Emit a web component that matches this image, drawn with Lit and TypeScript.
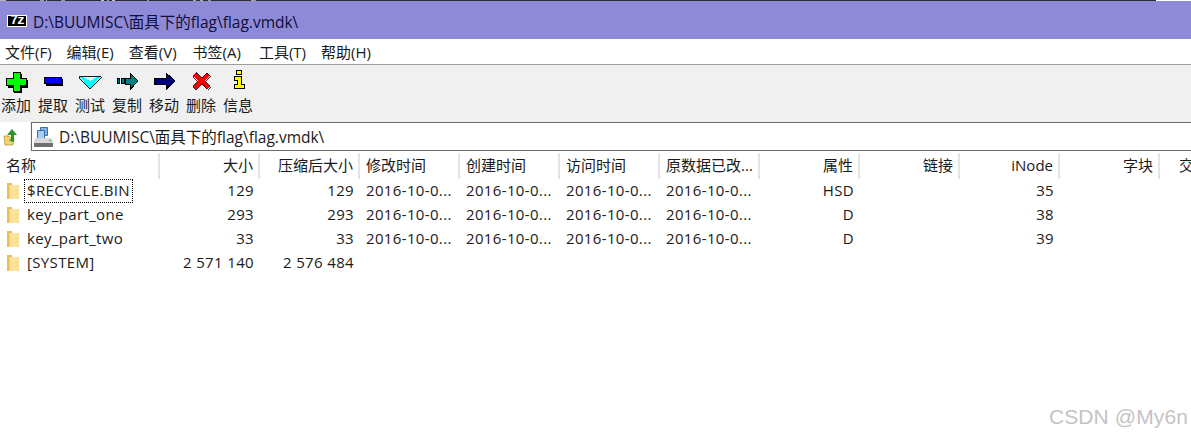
import { LitElement, html, css, svg } from "lit";
import { customElement } from "lit/decorators.js";

const cols = [
  { t: "名称", w: 160, l: true },
  { t: "大小", w: 100 },
  { t: "压缩后大小", w: 100 },
  { t: "修改时间", w: 100, l: true },
  { t: "创建时间", w: 100, l: true },
  { t: "访问时间", w: 100, l: true },
  { t: "原数据已改...", w: 100, l: true },
  { t: "属性", w: 100 },
  { t: "链接", w: 100 },
  { t: "iNode", w: 100 },
  { t: "字块", w: 100 },
  { t: "交", w: 100, l: true, far: true },
];
const d = "2016-10-0...";
const rows = [
  ["$RECYCLE.BIN", "129", "129", d, d, d, d, "HSD", "", "35", "", ""],
  ["key_part_one", "293", "293", d, d, d, d, "D", "", "38", "", ""],
  ["key_part_two", "33", "33", d, d, d, d, "D", "", "39", "", ""],
  ["[SYSTEM]", "2 571 140", "2 576 484", "", "", "", "", "", "", "", "", ""],
];

// Light gaps in the dark one-pixel line at the very top: [width, colour]
const stripSegs: [number, string][] = [
  [6, "#b9b4a8"], [34, "#2e2a2e"], [4, "#8b9ab0"], [2, "#2e2a2e"], [1, "#c2b9a0"], [14, "#2e2a2e"],
  [4, "#8b9ab0"], [36, "#2e2a2e"], [3, "#c9c4b8"], [3, "#2e2a2e"], [2, "#8b9ab0"], [3, "#2e2a2e"], [3, "#c9c4b8"],
  [32, "#2e2a2e"], [2, "#8b9ab0"], [44, "#2e2a2e"], [3, "#b9a080"], [4, "#2e2a2e"], [3, "#a0b0a0"],
  [5, "#2e2a2e"], [3, "#8b9ab0"], [40, "#2e2a2e"], [3, "#c9a060"], [2, "#8b9ab0"], [900, "#2e2a2e"],
];

const k = "#000";
const icons = [
  svg`<path d="M14 5h8v6h6v8h-6v6h-8v-6H8v-8h6z" fill="${k}"/><path d="M13.500 3.500h7v6h6v7h-6v6h-7v-6h-7v-7h7z" fill="#00ff00" stroke="${k}"/>`,
  svg`<path d="M9 10h17v7H9z" fill="${k}"/><path d="M7.500 8.500h17v6h-17z" fill="#0000ff" stroke="${k}"/>`,
  svg`<path d="M5 7.500h22L16 19.500z" fill="#00ffff" stroke="${k}" stroke-width=".9"/><path d="M9 8l7 4 7-4z" fill="#d8ffff"/>`,
  svg`<path d="M6.500 9.500h2v5h-2zM10.500 9.500h3v5h-3z" fill="#008080" stroke="${k}"/><path d="M14.500 9.500h5v-5l7.500 7.500-7.500 8v-5h-5z" fill="#008080" stroke="${k}"/>`,
  svg`<path d="M6.500 9.500h12v-5l8.500 7.500-8.500 8v-5h-12z" fill="#000080" stroke="${k}"/>`,
  svg`<path d="M11 3.500l5.500 5 5.500-5 3 3-5 5.500 5 5.500-3 3-5.500-5-5.500 5-3-3 5-5.500-5-5.500z" fill="#ff0000" stroke="${k}" stroke-width=".8"/>`,
  svg`<path d="M14.500 1.500h5v4h-5zM12.500 7.500h7v8h3v4h-10v-4h3v-4h-3z" fill="#ffff00" stroke="${k}"/>`,
];
const tools = ["添加", "提取", "测试", "复制", "移动", "删除", "信息"];
const menus: [string, string][] = [
  ["文件(F)", ""], ["编辑(E)", ""], ["查看(V)", "w1"], ["书签(A)", "w3"], ["工具(T)", ""], ["帮助(H)", ""],
];

@customElement("app-root")
export class AppRoot extends LitElement {
  static styles = css`
    :host {
      display: block;
      width: 1191px;
      height: 438px;
      overflow: hidden;
      position: relative;
      background: #fff;
      color: #1a1a1a;
      font: 15px "Open Sans", "Noto Sans CJK SC", sans-serif;
    }
    .strip { height: 1px; display: flex; overflow: hidden; }
    .strip i { flex: none; display: block; }
    .title {
      height: 38px;
      background: #8e8ad8;
      display: flex;
      align-items: center;
      gap: 6px;
      padding: 3px 0 0 7px;
      color: #0e0e38;
      box-sizing: border-box;
      font-size: 15.5px;
    }
    .logo {
      width: 20px;
      height: 12px;
      background: #000;
      color: #fff;
      display: flex;
      align-items: center;
      justify-content: center;
      font: bold 13px/12px "Liberation Mono", monospace;
      outline: 1px solid #fff;
      outline-offset: -1px;
      letter-spacing: -1px;
      margin-top: -1px;
    }
    .menu {
      height: 25px;
      display: flex;
      align-items: center;
      padding-left: 5px;
      gap: 15px;
      background: #fff;
      border-bottom: 1px solid #a0a0a0;
    }
    .menu .w1 { margin-right: 1px; }
    .menu .w3 { margin-right: 3px; }
    .toolbar {
      height: 56px;
      background: #f0f0f0;
      display: flex;
      gap: 5px;
      padding-top: 4px;
      box-sizing: border-box;
    }
    .tool { width: 32px; display: flex; flex-direction: column; align-items: center; }
    .tool svg { width: 32px; height: 24px; display: block; flex: none; }
    .tool span { line-height: 20px; margin-top: 2px; white-space: nowrap; }
    .addr {
      height: 30px;
      display: flex;
      background: #f0f0f0;
      box-sizing: border-box;
      padding-top: 1px;
    }
    .up { width: 30px; background: #fff; display: flex; align-items: center; padding-left: 3px; box-sizing: border-box; }
    .up svg { width: 16px; height: 18px; }
    .field {
      flex: 1;
      border: 1px solid #6a6a6a;
      border-right: 0;
      margin-left: 1px;
      background: #fff;
      display: flex;
      align-items: center;
      gap: 5px;
      padding-left: 2px;
      font-size: 15.5px;
    }
    .field svg { width: 20px; height: 22px; }
    .list { padding-top: 2px; overflow: hidden; }
    .row { display: flex; height: 24px; align-items: center; white-space: nowrap; }
    .row.item { letter-spacing: .35px; }
    .row.head { height: 26px; }
    .cell { flex: none; box-sizing: border-box; padding: 0 6px 2px 0; text-align: right; }
    .cell.l { text-align: left; padding-left: 6px; }
    .cell.far { padding-left: 19px; }
    .head .cell { height: 26px; line-height: 24px; padding-right: 5px; padding-bottom: 0; border-right: 2px solid #e5e5e5; }
    .head .cell.far { border-right: 0; }
    .cell.name { display: flex; align-items: center; height: 24px; padding: 0 0 0 7px; }
    .name svg { width: 12px; height: 16px; flex: none; margin-right: 5px; }
    .name span { box-sizing: border-box; height: 24px; padding: 0 2px; line-height: 20px; border: 1px dotted transparent; }
    .name span.focus { border-color: #000; }
    .mark {
      position: absolute;
      right: 3px;
      bottom: 9px;
      color: #c4c4c4;
      font: 21px "Liberation Sans", sans-serif;
      letter-spacing: .1px;
    }
  `;

  render() {
    const folder = svg`<path d="M0 0h5v2h7v14H0z" fill="#fbe29a"/><path d="M0 0h5v2H2.500v14H0z" fill="#e9bf5c"/>`;
    const path = "D:\\BUUMISC\\面具下的flag\\flag.vmdk\\";
    return html`
      <div class="strip">
        ${stripSegs.map(([w, c]) => html`<i style="width:${w}px;background:${c}"></i>`)}
      </div>
      <div class="title"><span class="logo">7z</span><span>${path}</span></div>
      <div class="menu">
        ${menus.map(([m, c]) => html`<span class=${c}>${m}</span>`)}
      </div>
      <div class="toolbar">
        ${tools.map(
          (t, i) => html`<div class="tool"><svg viewBox="0 0 32 24" shape-rendering="crispEdges">${icons[i]}</svg><span>${t}</span></div>`
        )}
      </div>
      <div class="addr">
        <div class="up">
          <svg viewBox="0 0 16 18">
            <path d="M1 8h5l2 2h3l-1 7H2z" fill="#f2d272" stroke="#b08a2a" stroke-width=".7"/>
            <path d="M9 1l5 6h-3v7q-3 0-5-2l2-1V7H4z" fill="#2a962a"/>
          </svg>
        </div>
        <div class="field">
          <svg viewBox="0 0 20 22">
            <path d="M6.500 1.500h7v8h-7z" fill="#7fb2e8" stroke="#3c6fb0"/>
            <path d="M3.500 4.500h7v8h-7z" fill="#a9cdf2" stroke="#3c6fb0"/>
            <path d="M2 12h15l2 3v5q0 1-1 1H1q-1 0-1-1v-5z" fill="#d8d8d8"/>
            <path d="M0 17h19v3q0 1-1 1H1q-1 0-1-1z" fill="#6f6f6f"/>
            <path d="M15 14h2v1h-2z" fill="#3c3"/>
          </svg>
          <span>${path}</span>
        </div>
      </div>
      <div class="list">
        <div class="row head">
          ${cols.map((c) => html`<div class="cell ${c.l ? "l" : ""} ${c.far ? "far" : ""}" style="width:${c.w}px">${c.t}</div>`)}
        </div>
        ${rows.map(
          (r, ri) => html`<div class="row item">
            ${r.map((v, i) =>
              i === 0
                ? html`<div class="cell name" style="width:${cols[0].w}px">
                    <svg viewBox="0 0 12 16">${folder}</svg>
                    <span class=${ri === 0 ? "focus" : ""}>${v}</span>
                  </div>`
                : html`<div class="cell ${cols[i].l ? "l" : ""}" style="width:${cols[i].w}px">${v}</div>`
            )}
          </div>`
        )}
      </div>
      <div class="mark">CSDN @My6n</div>
    `;
  }
}
